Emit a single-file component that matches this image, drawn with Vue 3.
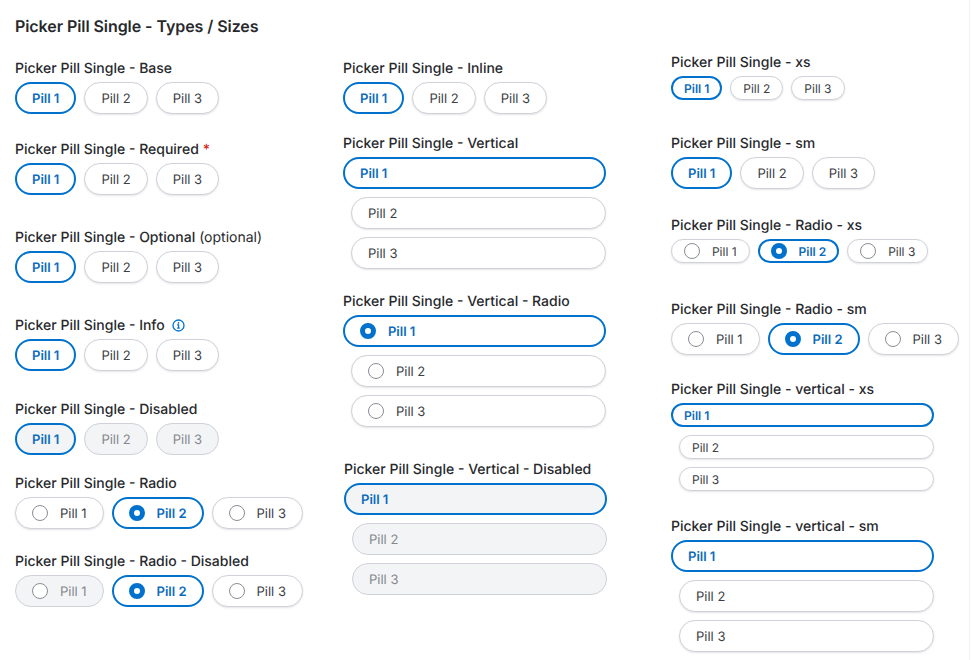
<script setup>
const h = (label, kind, size, opts = {}) => ({ label, kind, size, ...opts })
const columns = [
  { cls: 'col-a', sections: [
    h('Picker Pill Single - Base', 'row', 'md', { sel: 0, mt: 0 }),
    h('Picker Pill Single - Required', 'row', 'md', { sel: 0, mt: 25, req: true }),
    h('Picker Pill Single - Optional', 'row', 'md', { sel: 0, mt: 32, opt: true }),
    h('Picker Pill Single - Info', 'row', 'md', { sel: 0, mt: 32, info: true }),
    h('Picker Pill Single - Disabled', 'row', 'md', { sel: 0, mt: 28, disabled: [1, 2], dsel: true }),
    h('Picker Pill Single - Radio', 'row', 'md', { sel: 1, mt: 18, radio: true }),
    h('Picker Pill Single - Radio - Disabled', 'row', 'md', { sel: 1, mt: 22, radio: true, disabled: [0] }),
  ] },
  { cls: 'col-b', sections: [
    h('Picker Pill Single - Inline', 'row', 'md', { sel: 0, mt: 0 }),
    h('Picker Pill Single - Vertical', 'col', 'md', { sel: 0, mt: 19 }),
    h('Picker Pill Single - Vertical - Radio', 'col', 'md', { sel: 0, mt: 22, radio: true }),
    h('Picker Pill Single - Vertical - Disabled', 'col', 'md', { sel: 0, mt: 32, disabled: [1, 2], dsel: true, shift: true }),
  ] },
  { cls: 'col-c', sections: [
    h('Picker Pill Single - xs', 'row', 'xs', { sel: 0, mt: 0 }),
    h('Picker Pill Single - sm', 'row', 'md', { sel: 0, mt: 33 }),
    h('Picker Pill Single - Radio - xs', 'row', 'xs', { sel: 1, mt: 26, radio: true }),
    h('Picker Pill Single - Radio - sm', 'row', 'md', { sel: 1, mt: 36, radio: true }),
    h('Picker Pill Single - vertical - xs', 'col', 'xs', { sel: 0, mt: 24 }),
    h('Picker Pill Single - vertical - sm', 'col', 'md', { sel: 0, mt: 25 }),
  ] },
]
const pills = ['Pill 1', 'Pill 2', 'Pill 3']
function pillClass(s, i) {
  return {
    pill: true,
    xs: s.size === 'xs',
    radio: s.radio,
    selected: s.sel === i,
    off: s.disabled && s.disabled.includes(i),
    'off-sel': s.dsel && s.sel === i,
    indent: s.kind === 'col' && s.sel !== i,
  }
}
</script>

<template>
  <div class="page">
    <h1 class="title">Picker Pill Single - Types / Sizes</h1>
    <div class="columns">
      <div v-for="c in columns" :key="c.cls" class="column" :class="c.cls">
        <section v-for="s in c.sections" :key="s.label" :class="{ shift: s.shift }" :style="{ marginTop: s.mt + 'px' }">
          <div class="label">
            <span>{{ s.label }}</span>
            <span v-if="s.req" class="req">*</span>
            <span v-if="s.opt" class="opt">(optional)</span>
            <svg v-if="s.info" class="info" width="13" height="13" viewBox="0 0 13 13" fill="none">
              <circle cx="6.5" cy="6.5" r="5.5" stroke="#0072ce" stroke-width="1.3" />
              <rect x="5.9" y="5.6" width="1.3" height="3.6" fill="#0072ce" />
              <rect x="5" y="5.4" width="2" height="1" fill="#0072ce" />
              <rect x="5" y="8.6" width="3.1" height="1" fill="#0072ce" />
              <circle cx="6.5" cy="3.9" r="0.85" fill="#0072ce" />
            </svg>
          </div>
          <div :class="s.kind === 'col' ? 'stack' : 'inline'">
            <div v-for="(p, i) in pills" :key="p" :class="pillClass(s, i)">
              <span v-if="s.radio" class="dot" :class="{ on: s.sel === i }"></span>
              <span class="txt">{{ p }}</span>
            </div>
          </div>
        </section>
      </div>
    </div>
  </div>
</template>

<style>
html, body { margin: 0; background: #fff; }
</style>

<style scoped>
.page {
  width: 970px;
  height: 660px;
  box-sizing: border-box;
  padding: 16px 0 0 15px;
  border-right: 1px solid #f1f2f4;
  background: #fff;
  font-family: Inter, "Liberation Sans", sans-serif;
  color: #27292d;
  overflow: hidden;
  text-rendering: geometricPrecision;
}
.title {
  margin: 0;
  font-size: 16px;
  line-height: 20px;
  font-weight: 600;
  letter-spacing: -0.07px;
}
.columns {
  display: grid;
  grid-template-columns: 328px 328px 288px;
}
.col-a, .col-b { padding-top: 22px; }
.col-c { padding-top: 16px; }
.shift { margin-left: 1px; }
.label {
  display: flex;
  align-items: center;
  height: 20px;
  margin-bottom: 4px;
  font-size: 14px;
  font-weight: 550;
  white-space: nowrap;
}
.req { margin-left: 4px; color: #d9231e; }
.opt { margin-left: 4px; font-weight: 400; }
.info { margin-left: 7px; }
.inline { display: flex; gap: 8px; }
.stack { display: flex; flex-direction: column; gap: 8px; width: 263px; }
.pill {
  display: flex;
  align-items: center;
  box-sizing: border-box;
  height: 32px;
  padding: 0 16px;
  border: 1px solid #cfd2d9;
  border-radius: 16px;
  background: #fff;
  box-shadow: 0 1px 2px rgba(30, 35, 50, 0.12);
  font-size: 13px;
  color: #3b3e44;
  white-space: nowrap;
}
.txt { padding-top: 1px; }
.pill.xs { height: 24px; padding: 0 12px; font-size: 12px; }
.pill.radio { gap: 11.95px; }
.pill.selected {
  border: 2px solid #0072ce;
  color: #0b6bbd;
  font-weight: 600;
  box-shadow: none;
  padding: 0 15px;
}
.pill.xs.selected { padding: 0 11px; }
.pill.off { background: #f3f4f6; color: #84878d; box-shadow: none; }
.pill.off-sel { background: #f3f4f6; }
.indent { margin-left: 8px; }
.dot {
  box-sizing: border-box;
  flex: none;
  width: 16px;
  height: 16px;
  border: 1px solid #8a8d94;
  border-radius: 50%;
  background: #fff;
}
.dot.on {
  border: 5px solid #0072ce;
}
</style>
